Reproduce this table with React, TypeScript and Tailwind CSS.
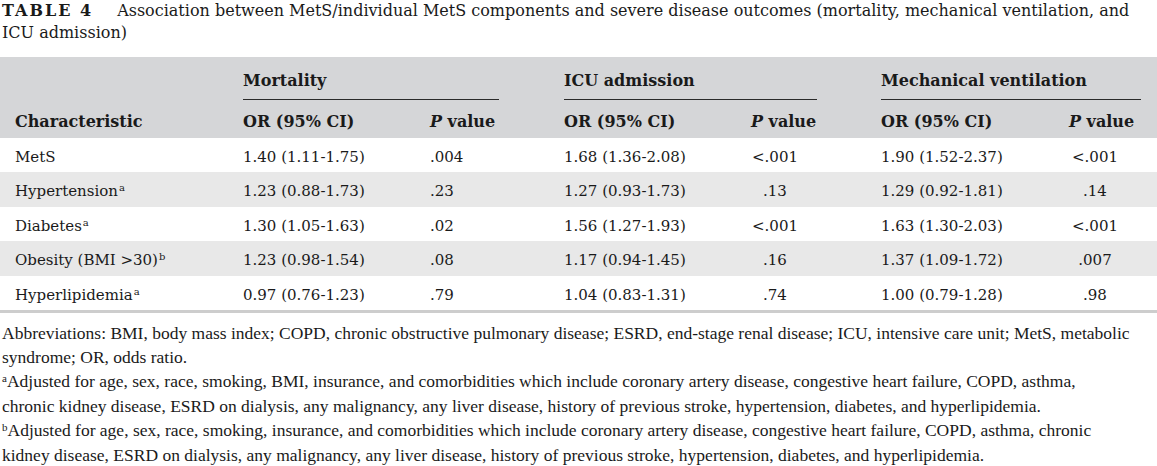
import * as React from 'react';

const row = 'grid grid-cols-[243px_187px_69px_65px_187px_66px_64px_188px_72px_1fr]';

interface DataRow {
    label: string;
    sup?: string;
    m: [string, string];
    icu: [string, string];
    mv: [string, string];
}

const rows: DataRow[] = [
    { label: 'MetS', m: ['1.40 (1.11-1.75)', '.004'], icu: ['1.68 (1.36-2.08)', '<.001'], mv: ['1.90 (1.52-2.37)', '<.001'] },
    { label: 'Hypertension', sup: 'a', m: ['1.23 (0.88-1.73)', '.23'], icu: ['1.27 (0.93-1.73)', '.13'], mv: ['1.29 (0.92-1.81)', '.14'] },
    { label: 'Diabetes', sup: 'a', m: ['1.30 (1.05-1.63)', '.02'], icu: ['1.56 (1.27-1.93)', '<.001'], mv: ['1.63 (1.30-2.03)', '<.001'] },
    { label: 'Obesity (BMI >30)', sup: 'b', m: ['1.23 (0.98-1.54)', '.08'], icu: ['1.17 (0.94-1.45)', '.16'], mv: ['1.37 (1.09-1.72)', '.007'] },
    { label: 'Hyperlipidemia', sup: 'a', m: ['0.97 (0.76-1.23)', '.79'], icu: ['1.04 (0.83-1.31)', '.74'], mv: ['1.00 (0.79-1.28)', '.98'] },
];

const PValue = () => (
    <span><i>P</i> value</span>
);

const App: React.FC = () => {
    return (
        <div className="w-[1157px] h-[466px] bg-white overflow-hidden text-[#1a1a1a]">
            {/* Caption */}
            <p className="px-[2px] font-['DejaVu_Serif',serif] text-[16px] leading-[22px] h-[57px] whitespace-nowrap">
                <span className="font-bold tracking-[2px] mr-[24px]">TABLE 4</span>
                Association between MetS/individual MetS components and severe disease outcomes (mortality, mechanical ventilation, and
                <br />
                ICU admission)
            </p>

            {/* Table */}
            <div className="font-['DejaVu_Serif',serif] text-[15px] leading-[22px]">
                <div className="bg-[#d5d6d8] text-[16px]">
                    <div className={`${row} pt-[13px] font-bold`}>
                        <div></div>
                        <div className="col-span-2 pb-[7px] border-b-[1.5px] border-[#2a2a2a]">Mortality</div>
                        <div></div>
                        <div className="col-span-2 pb-[7px] border-b-[1.5px] border-[#2a2a2a]">ICU admission</div>
                        <div></div>
                        <div className="col-span-2 pb-[7px] border-b-[1.5px] border-[#2a2a2a]">Mechanical ventilation</div>
                        <div></div>
                    </div>
                    <div className={`${row} pt-[11px] h-[37.5px] font-bold`}>
                        <div className="pl-[15px]">Characteristic</div>
                        <div>OR (95% CI)</div>
                        <div><PValue /></div>
                        <div></div>
                        <div>OR (95% CI)</div>
                        <div><PValue /></div>
                        <div></div>
                        <div>OR (95% CI)</div>
                        <div><PValue /></div>
                        <div></div>
                    </div>
                </div>

                {rows.map((r, i) => (
                    <div key={r.label} className={`${row} h-[34.5px] pt-[8px] ${i % 2 === 1 ? 'bg-[#e8e8e8]' : 'bg-white'}`}>
                        <div className="pl-[15px] whitespace-nowrap">
                            {r.label}
                            {r.sup && <sup className="text-[10px] ml-[1px]">{r.sup}</sup>}
                        </div>
                        <div>{r.m[0]}</div>
                        <div>{r.m[1]}</div>
                        <div></div>
                        <div>{r.icu[0]}</div>
                        <div className="text-center pr-[18px]">{r.icu[1]}</div>
                        <div></div>
                        <div>{r.mv[0]}</div>
                        <div className="text-center pr-[20px]">{r.mv[1]}</div>
                        <div></div>
                    </div>
                ))}
                <div className="h-[2.5px] bg-[#cdcdcd]"></div>
            </div>

            {/* Footnotes */}
            <div className="mt-[8px] px-[2px] font-['Liberation_Serif',serif] text-[17.5px] leading-[24.4px] whitespace-nowrap">
                <p>
                    Abbreviations: BMI, body mass index; COPD, chronic obstructive pulmonary disease; ESRD, end-stage renal disease; ICU, intensive care unit; MetS, metabolic
                    <br />
                    syndrome; OR, odds ratio.
                </p>
                <p>
                    <sup className="text-[11px]">a</sup>Adjusted for age, sex, race, smoking, BMI, insurance, and comorbidities which include coronary artery disease, congestive heart failure, COPD, asthma,
                    <br />
                    chronic kidney disease, ESRD on dialysis, any malignancy, any liver disease, history of previous stroke, hypertension, diabetes, and hyperlipidemia.
                </p>
                <p>
                    <sup className="text-[11px]">b</sup>Adjusted for age, sex, race, smoking, insurance, and comorbidities which include coronary artery disease, congestive heart failure, COPD, asthma, chronic
                    <br />
                    kidney disease, ESRD on dialysis, any malignancy, any liver disease, history of previous stroke, hypertension, diabetes, and hyperlipidemia.
                </p>
            </div>
        </div>
    );
};

export default App;
